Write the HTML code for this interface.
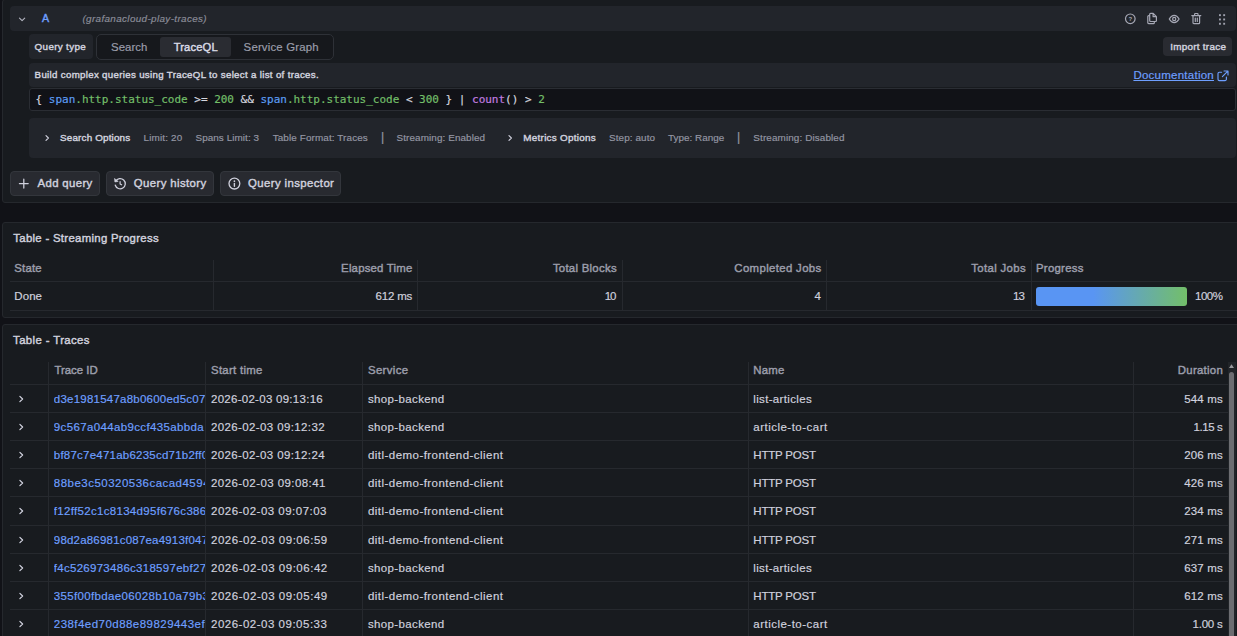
<!DOCTYPE html>
<html lang="en">
<head>
<meta charset="utf-8">
<title>Explore - Traces</title>
<style>
*{box-sizing:border-box;margin:0;padding:0}
html,body{width:1237px;height:636px;overflow:hidden;background:#111217}
body{position:relative;font-family:"Liberation Sans",sans-serif;font-size:11px;color:#ccccdc}
.abs{position:absolute}
.t{position:absolute;white-space:nowrap;line-height:14px;-webkit-text-stroke:0.18px currentColor}
.m{-webkit-text-stroke:0.42px currentColor}
.box{position:absolute;background:#181b1f;border:1px solid #25282d;border-radius:3px}
.sec{position:absolute;background:#22252b;border-radius:2px}
.btn{position:absolute;background:#282a30;border:1px solid #33363c;border-radius:4px}
svg{position:absolute;overflow:visible}
.code{font-family:"DejaVu Sans Mono","Liberation Mono",monospace}
h2{font-weight:normal}
button{font-family:inherit;color:inherit;padding:0;margin:0;text-align:left}
button.t,label.t{background:none;border:0}
a{text-decoration:none}
.hl{position:absolute;height:1px;background:#26292e}
.vl{position:absolute;width:1px;background:#26292e}
</style>
</head>
<body>
<main>
<section aria-label="Query editor">
<div class="box" style="left:2px;top:-1px;width:1240px;height:204px"></div>
<div class="sec" style="left:10px;top:6px;width:1226px;height:25px;border-radius:4px"></div>
<svg style="left:17px;top:13.7px" width="10" height="10" viewBox="0 0 10 10"><path d="M2.5 4.2 L5.1 6.6 L7.7 4.2" fill="none" stroke="#b4b5c1" stroke-width="1.15" stroke-linecap="round" stroke-linejoin="round"/></svg>
<div class="t m" style="left:41.9px;top:11px;font-size:10.7px;letter-spacing:0.259px;color:#6e9fff;">A</div>
<div class="t" style="left:82.4px;top:12px;font-size:9.9px;letter-spacing:0.359px;color:#8a8c98;font-style:italic;">(grafanacloud-play-traces)</div>
<svg style="left:1124px;top:13px" width="12" height="12" viewBox="0 0 12 12"><circle cx="6.3" cy="5.8" r="4.8" fill="none" stroke="#a6a8b5" stroke-width="1.2"/><text x="6.3" y="8" font-size="6" font-weight="bold" font-family="Liberation Sans, sans-serif" text-anchor="middle" fill="#a6a8b5">?</text></svg>
<svg style="left:1146px;top:12px" width="12" height="13" viewBox="0 0 12 13"><path d="M4.6 1.4 h2.6 l3.2 3.2 v4 a0.9 0.9 0 0 1 -0.9 0.9 h-4.9 a0.9 0.9 0 0 1 -0.9 -0.9 v-6.3 a0.9 0.9 0 0 1 0.9 -0.9 z M7.1 1.6 v3.1 h3.1 M3.7 3.6 h-1 a0.9 0.9 0 0 0 -0.9 0.9 v6.3 a0.9 0.9 0 0 0 0.9 0.9 h4.7 a0.9 0.9 0 0 0 0.9 -0.9 v-1.3" fill="none" stroke="#a6a8b5" stroke-width="1.2" stroke-linejoin="round"/></svg>
<svg style="left:1168px;top:13px" width="13" height="12" viewBox="0 0 13 12"><path d="M1.3 6 C2.9 3.3 4.6 2.4 6.2 2.4 S9.5 3.3 11.1 6 C9.5 8.7 7.8 9.6 6.2 9.6 S2.9 8.7 1.3 6 z" fill="none" stroke="#a6a8b5" stroke-width="1.2"/><circle cx="6.2" cy="6" r="1.6" fill="none" stroke="#a6a8b5" stroke-width="1.2"/></svg>
<svg style="left:1190px;top:12px" width="12" height="13" viewBox="0 0 12 13"><path d="M1.8 3.6 h9 M4.6 3.4 v-1.2 a0.7 0.7 0 0 1 0.7 -0.7 h2 a0.7 0.7 0 0 1 0.7 0.7 v1.2 M3 3.8 v7 a0.9 0.9 0 0 0 0.9 0.9 h4.8 a0.9 0.9 0 0 0 0.9 -0.9 v-7 M5.3 6 v3.4 M7.3 6 v3.4" fill="none" stroke="#a6a8b5" stroke-width="1.2" stroke-linecap="round"/></svg>
<svg style="left:1218px;top:13px" width="9" height="12" viewBox="0 0 9 12"><g fill="#9fa1ad"><rect x="1" y="1.2" width="1.9" height="1.9"/><rect x="5.2" y="1.2" width="1.9" height="1.9"/><rect x="1" y="5.5" width="1.9" height="1.9"/><rect x="5.2" y="5.5" width="1.9" height="1.9"/><rect x="1" y="9.8" width="1.9" height="1.9"/><rect x="5.2" y="9.8" width="1.9" height="1.9"/></g></svg>
<div class="sec" style="left:29px;top:34px;width:64px;height:25px;border-radius:4px"></div>
<label class="t m" style="left:34.6px;top:40px;font-size:9.9px;letter-spacing:0.309px;color:#d0d1de;">Query type</label>
<div class="abs" style="left:96px;top:34px;width:238px;height:26px;border:1px solid #2e3137;border-radius:5px;background:#16181c"></div>
<div class="abs" style="left:160px;top:37px;width:71px;height:20px;background:#2a2c32;border-radius:3px"></div>
<button class="t" type="button" role="radio" aria-checked="false" style="left:111px;top:40px;font-size:11.4px;letter-spacing:0.051px;color:#9c9eab;">Search</button>
<button class="t m" type="button" role="radio" aria-checked="true" style="left:173.7px;top:40px;font-size:11.2px;letter-spacing:0.142px;color:#dadbe6;">TraceQL</button>
<button class="t" type="button" role="radio" aria-checked="false" style="left:243.6px;top:40px;font-size:11.4px;letter-spacing:0.184px;color:#9c9eab;">Service Graph</button>
<div class="abs" style="left:1163px;top:37px;width:69px;height:19px;background:#292b31;border-radius:4px"></div>
<button class="t m" type="button" style="left:1170.2px;top:40px;font-size:9.9px;letter-spacing:0.276px;color:#d0d1de;">Import trace</button>
<div class="sec" style="left:29px;top:63px;width:1207px;height:24px;border-radius:4px"></div>
<div class="t m" style="left:34.6px;top:68px;font-size:9.7px;letter-spacing:0.323px;color:#d0d1de;">Build complex queries using TraceQL to select a list of traces.</div>
<a class="t" href="#documentation" style="left:1133.4px;top:68px;font-size:11.5px;letter-spacing:0.249px;color:#6e9fff;text-decoration:underline;text-underline-offset:1px;text-decoration-thickness:1px;">Documentation</a>
<svg style="left:1216px;top:68.6px" width="13" height="13" viewBox="0 0 13 13"><path d="M5.6 3.2 h-2.2 a1.4 1.4 0 0 0 -1.4 1.4 v5.6 a1.4 1.4 0 0 0 1.4 1.4 h5.6 a1.4 1.4 0 0 0 1.4 -1.4 v-2.2 M8 2 h4 v4 M11.8 2.2 L6.4 7.6" fill="none" stroke="#6e9fff" stroke-width="1.15" stroke-linecap="round" stroke-linejoin="round"/></svg>
<div class="abs" style="left:29px;top:88px;width:1207px;height:23px;background:#111217;border:1px solid #2a2d33;border-radius:3px"></div>
<code class="t code" style="left:35.6px;top:93px;font-size:11px;letter-spacing:-0.012px;color:#d4d5df">{ <span style="color:#5c9df5">span</span><span style="color:#73bf69">.http.status_code</span> &gt;= <span style="color:#73bf69">200</span> &amp;&amp; <span style="color:#5c9df5">span</span><span style="color:#73bf69">.http.status_code</span> &lt; <span style="color:#73bf69">300</span> } | <span style="color:#c27de0">count</span>() &gt; <span style="color:#73bf69">2</span></code>
<div class="sec" style="left:29px;top:118px;width:1207px;height:40px;border-radius:4px"></div>
<svg style="left:43px;top:133px" width="8" height="10" viewBox="0 0 8 10"><path d="M3 2.7 L5.4 5 L3 7.3" fill="none" stroke="#d0d1de" stroke-width="1.15" stroke-linecap="round" stroke-linejoin="round"/></svg>
<div class="t m" style="left:60.1px;top:131px;font-size:9.9px;letter-spacing:0.152px;color:#d0d1de;">Search Options</div>
<div class="t" style="left:143.6px;top:131px;font-size:9.9px;letter-spacing:0.164px;color:#9496a3;">Limit: 20</div>
<div class="t" style="left:195.5px;top:131px;font-size:9.9px;letter-spacing:0.073px;color:#9496a3;">Spans Limit: 3</div>
<div class="t" style="left:272.7px;top:131px;font-size:9.9px;letter-spacing:0.122px;color:#9496a3;">Table Format: Traces</div>
<span class="t" style="left:380.9px;top:130px;font-size:12.3px;color:#9496a3;">|</span>
<div class="t" style="left:396.5px;top:131px;font-size:9.9px;letter-spacing:0.109px;color:#9496a3;">Streaming: Enabled</div>
<svg style="left:506px;top:133px" width="8" height="10" viewBox="0 0 8 10"><path d="M3 2.7 L5.4 5 L3 7.3" fill="none" stroke="#d0d1de" stroke-width="1.15" stroke-linecap="round" stroke-linejoin="round"/></svg>
<div class="t m" style="left:523.3px;top:131px;font-size:9.9px;letter-spacing:0.273px;color:#d0d1de;">Metrics Options</div>
<div class="t" style="left:609px;top:131px;font-size:9.9px;letter-spacing:0.107px;color:#9496a3;">Step: auto</div>
<div class="t" style="left:668.1px;top:131px;font-size:9.9px;letter-spacing:0.018px;color:#9496a3;">Type: Range</div>
<span class="t" style="left:736.9px;top:130px;font-size:12.3px;color:#9496a3;">|</span>
<div class="t" style="left:753.3px;top:131px;font-size:9.9px;letter-spacing:0.125px;color:#9496a3;">Streaming: Disabled</div>
<button type="button" class="btn" style="left:10px;top:171px;width:90px;height:25px">
<svg style="left:7px;top:6px" width="11" height="11" viewBox="0 0 11 11"><path d="M5.8 1.2 v8.8 M1.4 5.6 h8.8" stroke="#cfd0dc" stroke-width="1.25" fill="none" stroke-linecap="round"/></svg>
<span class="t m" style="left:26.5px;top:4px;font-size:11.4px;letter-spacing:0.351px;color:#d0d1de;">Add query</span>
</button>
<button type="button" class="btn" style="left:106px;top:171px;width:108px;height:25px">
<svg style="left:6px;top:5px" width="13" height="13" viewBox="0 0 13 13"><path d="M2.7 4.3 A5.1 5.1 0 1 1 2.3 8.2" stroke="#cfd0dc" stroke-width="1.3" fill="none" stroke-linecap="round"/><path d="M1.5 1.5 L1.9 5 L5.2 4.4 z" fill="#cfd0dc" stroke="#cfd0dc" stroke-width="0.6" stroke-linejoin="round"/><path d="M7.1 4.6 v2.3 l1.5 0.9" stroke="#cfd0dc" stroke-width="1.2" fill="none" stroke-linecap="round" stroke-linejoin="round"/></svg>
<span class="t m" style="left:26.8px;top:4px;font-size:11.4px;letter-spacing:0.382px;color:#d0d1de;">Query history</span>
</button>
<button type="button" class="btn" style="left:220px;top:171px;width:121px;height:25px">
<svg style="left:7px;top:5px" width="13" height="13" viewBox="0 0 13 13"><circle cx="6.4" cy="6.6" r="5.4" fill="none" stroke="#cfd0dc" stroke-width="1.3"/><path d="M6.4 6.4 v2.8" stroke="#cfd0dc" stroke-width="1.4" stroke-linecap="round"/><circle cx="6.4" cy="4.2" r="0.85" fill="#cfd0dc"/></svg>
<span class="t m" style="left:27.1px;top:4px;font-size:11.4px;letter-spacing:0.386px;color:#d0d1de;">Query inspector</span>
</button>
</section>
<section aria-label="Table - Streaming Progress">
<div class="box" style="left:2px;top:222px;width:1240px;height:96px"></div>
<h2 class="t m" style="left:13.3px;top:231px;font-size:11.4px;letter-spacing:0.292px;color:#d0d1de;">Table - Streaming Progress</h2>
<div role="table" aria-label="Streaming Progress">
<div role="row">
<div class="t m" role="columnheader" style="left:14.3px;top:261px;font-size:11.4px;letter-spacing:0.198px;color:#9c9eab;">State</div>
<div class="t m" role="columnheader" style="right:824.50px;top:261px;font-size:11.4px;letter-spacing:0.199px;color:#9c9eab;">Elapsed Time</div>
<div class="t m" role="columnheader" style="right:620.13px;top:261px;font-size:11.4px;letter-spacing:0.268px;color:#9c9eab;">Total Blocks</div>
<div class="t m" role="columnheader" style="right:415.45px;top:261px;font-size:11.4px;letter-spacing:0.349px;color:#9c9eab;">Completed Jobs</div>
<div class="t m" role="columnheader" style="right:211.07px;top:261px;font-size:11.4px;letter-spacing:0.33px;color:#9c9eab;">Total Jobs</div>
<div class="t m" role="columnheader" style="left:1036px;top:261px;font-size:11.4px;letter-spacing:0.263px;color:#9c9eab;">Progress</div>
</div>
<div role="row">
<div class="t" role="cell" style="left:14.3px;top:289px;font-size:11.5px;letter-spacing:0.075px;color:#d0d1de;">Done</div>
<div class="t" role="cell" style="right:824.89px;top:289px;font-size:11.5px;letter-spacing:-0.186px;color:#d0d1de;">612 ms</div>
<div class="t" role="cell" style="right:621.50px;top:289px;font-size:11.5px;letter-spacing:-0.998px;color:#d0d1de;">10</div>
<div class="t" role="cell" style="right:415.81px;top:289px;font-size:11.5px;letter-spacing:0.194px;color:#d0d1de;">4</div>
<div class="t" role="cell" style="right:212.80px;top:289px;font-size:11.5px;letter-spacing:-0.798px;color:#d0d1de;">13</div>
<div role="cell">
<div class="abs" role="progressbar" aria-valuenow="100" aria-valuemin="0" aria-valuemax="100" style="left:1036px;top:287px;width:151px;height:19px;border-radius:3px;background:linear-gradient(90deg,#5995f3 0%,#5995f3 38%,#73bf69 100%)"></div>
<span class="t" style="left:1195px;top:289px;font-size:11.5px;letter-spacing:-0.48px;color:#d0d1de;">100%</span>
</div>
</div>
<div class="vl" style="left:213px;top:260px;height:51px"></div>
<div class="vl" style="left:417px;top:260px;height:51px"></div>
<div class="vl" style="left:622px;top:260px;height:51px"></div>
<div class="vl" style="left:826px;top:260px;height:51px"></div>
<div class="vl" style="left:1031px;top:260px;height:51px"></div>
<div class="hl" style="left:10px;top:281px;width:1230px"></div>
<div class="hl" style="left:10px;top:310px;width:1230px"></div>
</div>
</section>
<section aria-label="Table - Traces">
<div class="box" style="left:2px;top:324px;width:1240px;height:330px"></div>
<h2 class="t m" style="left:13.1px;top:333px;font-size:11.4px;letter-spacing:0.375px;color:#d0d1de;">Table - Traces</h2>
<div role="table" aria-label="Traces">
<div role="row">
<div class="t m" role="columnheader" style="left:54.5px;top:363px;font-size:11.4px;letter-spacing:-0.019px;color:#9c9eab;">Trace ID</div>
<div class="t m" role="columnheader" style="left:211px;top:363px;font-size:11.4px;letter-spacing:0.285px;color:#9c9eab;">Start time</div>
<div class="t m" role="columnheader" style="left:368px;top:363px;font-size:11.4px;letter-spacing:0.345px;color:#9c9eab;">Service</div>
<div class="t m" role="columnheader" style="left:753.3px;top:363px;font-size:11.4px;letter-spacing:0.177px;color:#9c9eab;">Name</div>
<div class="t m" role="columnheader" style="right:13.92px;top:363px;font-size:11.4px;letter-spacing:0.28px;color:#9c9eab;">Duration</div>
</div>
<div class="vl" style="left:48px;top:362px;height:280px"></div>
<div class="vl" style="left:205px;top:362px;height:280px"></div>
<div class="vl" style="left:362px;top:362px;height:280px"></div>
<div class="vl" style="left:748px;top:362px;height:280px"></div>
<div class="vl" style="left:1133px;top:362px;height:280px"></div>
<div class="hl" style="left:10px;top:384px;width:1218px"></div>
<div role="row">
<svg role="img" aria-label="Expand row" style="left:17px;top:393.6px" width="8" height="10" viewBox="0 0 8 10"><path d="M2.9 2.4 L5.6 5 L2.9 7.6" fill="none" stroke="#d0d1de" stroke-width="1.25" stroke-linecap="round" stroke-linejoin="round"/></svg>
<a class="t" role="cell" href="#trace-d3e1981547a8b0600ed5c07" style="left:53.8px;top:392px;font-size:11.5px;letter-spacing:0.23px;color:#6e9fff;width:151.2px;overflow:hidden;">d3e1981547a8b0600ed5c07</a>
<div class="t" role="cell" style="left:211px;top:392px;font-size:11.5px;letter-spacing:0.274px;color:#d0d1de;">2026-02-03 09:13:16</div>
<div class="t" role="cell" style="left:368px;top:392px;font-size:11.5px;letter-spacing:0.354px;color:#d0d1de;">shop-backend</div>
<div class="t" role="cell" style="left:753.3px;top:392px;font-size:11.5px;letter-spacing:0.338px;color:#d0d1de;">list-articles</div>
<div class="t" role="cell" style="right:14.01px;top:392px;font-size:11.5px;letter-spacing:0.189px;color:#d0d1de;">544 ms</div>
</div>
<div class="hl" style="left:10px;top:412px;width:1218px"></div>
<div role="row">
<svg role="img" aria-label="Expand row" style="left:17px;top:421.8px" width="8" height="10" viewBox="0 0 8 10"><path d="M2.9 2.4 L5.6 5 L2.9 7.6" fill="none" stroke="#d0d1de" stroke-width="1.25" stroke-linecap="round" stroke-linejoin="round"/></svg>
<a class="t" role="cell" href="#trace-9c567a044ab9ccf435abbda" style="left:53.8px;top:420px;font-size:11.5px;letter-spacing:0.36px;color:#6e9fff;width:151.2px;overflow:hidden;">9c567a044ab9ccf435abbda</a>
<div class="t" role="cell" style="left:211px;top:420px;font-size:11.5px;letter-spacing:0.379px;color:#d0d1de;">2026-02-03 09:12:32</div>
<div class="t" role="cell" style="left:368px;top:420px;font-size:11.5px;letter-spacing:0.354px;color:#d0d1de;">shop-backend</div>
<div class="t" role="cell" style="left:753.3px;top:420px;font-size:11.5px;letter-spacing:0.486px;color:#d0d1de;">article-to-cart</div>
<div class="t" role="cell" style="right:14.59px;top:420px;font-size:11.5px;letter-spacing:-0.388px;color:#d0d1de;">1.15 s</div>
</div>
<div class="hl" style="left:10px;top:440px;width:1218px"></div>
<div role="row">
<svg role="img" aria-label="Expand row" style="left:17px;top:450.0px" width="8" height="10" viewBox="0 0 8 10"><path d="M2.9 2.4 L5.6 5 L2.9 7.6" fill="none" stroke="#d0d1de" stroke-width="1.25" stroke-linecap="round" stroke-linejoin="round"/></svg>
<a class="t" role="cell" href="#trace-bf87c7e471ab6235cd71b2ff0" style="left:53.8px;top:448px;font-size:11.5px;letter-spacing:0.23px;color:#6e9fff;width:151.2px;overflow:hidden;">bf87c7e471ab6235cd71b2ff0</a>
<div class="t" role="cell" style="left:211px;top:448px;font-size:11.5px;letter-spacing:0.379px;color:#d0d1de;">2026-02-03 09:12:24</div>
<div class="t" role="cell" style="left:368px;top:448px;font-size:11.5px;letter-spacing:0.455px;color:#d0d1de;">ditl-demo-frontend-client</div>
<div class="t" role="cell" style="left:753.3px;top:448px;font-size:11.5px;letter-spacing:-0.214px;color:#d0d1de;">HTTP POST</div>
<div class="t" role="cell" style="right:14.01px;top:448px;font-size:11.5px;letter-spacing:0.189px;color:#d0d1de;">206 ms</div>
</div>
<div class="hl" style="left:10px;top:468px;width:1218px"></div>
<div role="row">
<svg role="img" aria-label="Expand row" style="left:17px;top:478.2px" width="8" height="10" viewBox="0 0 8 10"><path d="M2.9 2.4 L5.6 5 L2.9 7.6" fill="none" stroke="#d0d1de" stroke-width="1.25" stroke-linecap="round" stroke-linejoin="round"/></svg>
<a class="t" role="cell" href="#trace-88be3c50320536cacad4594" style="left:53.8px;top:476px;font-size:11.5px;letter-spacing:0.48px;color:#6e9fff;width:151.2px;overflow:hidden;">88be3c50320536cacad4594</a>
<div class="t" role="cell" style="left:211px;top:476px;font-size:11.5px;letter-spacing:0.421px;color:#d0d1de;">2026-02-03 09:08:41</div>
<div class="t" role="cell" style="left:368px;top:476px;font-size:11.5px;letter-spacing:0.455px;color:#d0d1de;">ditl-demo-frontend-client</div>
<div class="t" role="cell" style="left:753.3px;top:476px;font-size:11.5px;letter-spacing:-0.214px;color:#d0d1de;">HTTP POST</div>
<div class="t" role="cell" style="right:14.01px;top:476px;font-size:11.5px;letter-spacing:0.189px;color:#d0d1de;">426 ms</div>
</div>
<div class="hl" style="left:10px;top:496px;width:1218px"></div>
<div role="row">
<svg role="img" aria-label="Expand row" style="left:17px;top:506.4px" width="8" height="10" viewBox="0 0 8 10"><path d="M2.9 2.4 L5.6 5 L2.9 7.6" fill="none" stroke="#d0d1de" stroke-width="1.25" stroke-linecap="round" stroke-linejoin="round"/></svg>
<a class="t" role="cell" href="#trace-f12ff52c1c8134d95f676c386" style="left:53.8px;top:504px;font-size:11.5px;letter-spacing:0.31px;color:#6e9fff;width:151.2px;overflow:hidden;">f12ff52c1c8134d95f676c386</a>
<div class="t" role="cell" style="left:211px;top:504px;font-size:11.5px;letter-spacing:0.484px;color:#d0d1de;">2026-02-03 09:07:03</div>
<div class="t" role="cell" style="left:368px;top:504px;font-size:11.5px;letter-spacing:0.455px;color:#d0d1de;">ditl-demo-frontend-client</div>
<div class="t" role="cell" style="left:753.3px;top:504px;font-size:11.5px;letter-spacing:-0.214px;color:#d0d1de;">HTTP POST</div>
<div class="t" role="cell" style="right:14.01px;top:504px;font-size:11.5px;letter-spacing:0.189px;color:#d0d1de;">234 ms</div>
</div>
<div class="hl" style="left:10px;top:525px;width:1218px"></div>
<div role="row">
<svg role="img" aria-label="Expand row" style="left:17px;top:534.6px" width="8" height="10" viewBox="0 0 8 10"><path d="M2.9 2.4 L5.6 5 L2.9 7.6" fill="none" stroke="#d0d1de" stroke-width="1.25" stroke-linecap="round" stroke-linejoin="round"/></svg>
<a class="t" role="cell" href="#trace-98d2a86981c087ea4913f047" style="left:53.8px;top:533px;font-size:11.5px;letter-spacing:0.2px;color:#6e9fff;width:151.2px;overflow:hidden;">98d2a86981c087ea4913f047</a>
<div class="t" role="cell" style="left:211px;top:533px;font-size:11.5px;letter-spacing:0.526px;color:#d0d1de;">2026-02-03 09:06:59</div>
<div class="t" role="cell" style="left:368px;top:533px;font-size:11.5px;letter-spacing:0.455px;color:#d0d1de;">ditl-demo-frontend-client</div>
<div class="t" role="cell" style="left:753.3px;top:533px;font-size:11.5px;letter-spacing:-0.214px;color:#d0d1de;">HTTP POST</div>
<div class="t" role="cell" style="right:14.01px;top:533px;font-size:11.5px;letter-spacing:0.189px;color:#d0d1de;">271 ms</div>
</div>
<div class="hl" style="left:10px;top:553px;width:1218px"></div>
<div role="row">
<svg role="img" aria-label="Expand row" style="left:17px;top:562.8px" width="8" height="10" viewBox="0 0 8 10"><path d="M2.9 2.4 L5.6 5 L2.9 7.6" fill="none" stroke="#d0d1de" stroke-width="1.25" stroke-linecap="round" stroke-linejoin="round"/></svg>
<a class="t" role="cell" href="#trace-f4c526973486c318597ebf27" style="left:53.8px;top:561px;font-size:11.5px;letter-spacing:0.28px;color:#6e9fff;width:151.2px;overflow:hidden;">f4c526973486c318597ebf27</a>
<div class="t" role="cell" style="left:211px;top:561px;font-size:11.5px;letter-spacing:0.526px;color:#d0d1de;">2026-02-03 09:06:42</div>
<div class="t" role="cell" style="left:368px;top:561px;font-size:11.5px;letter-spacing:0.354px;color:#d0d1de;">shop-backend</div>
<div class="t" role="cell" style="left:753.3px;top:561px;font-size:11.5px;letter-spacing:0.338px;color:#d0d1de;">list-articles</div>
<div class="t" role="cell" style="right:14.01px;top:561px;font-size:11.5px;letter-spacing:0.189px;color:#d0d1de;">637 ms</div>
</div>
<div class="hl" style="left:10px;top:581px;width:1218px"></div>
<div role="row">
<svg role="img" aria-label="Expand row" style="left:17px;top:591.0px" width="8" height="10" viewBox="0 0 8 10"><path d="M2.9 2.4 L5.6 5 L2.9 7.6" fill="none" stroke="#d0d1de" stroke-width="1.25" stroke-linecap="round" stroke-linejoin="round"/></svg>
<a class="t" role="cell" href="#trace-355f00fbdae06028b10a79b3" style="left:53.8px;top:589px;font-size:11.5px;letter-spacing:0.35px;color:#6e9fff;width:151.2px;overflow:hidden;">355f00fbdae06028b10a79b3</a>
<div class="t" role="cell" style="left:211px;top:589px;font-size:11.5px;letter-spacing:0.526px;color:#d0d1de;">2026-02-03 09:05:49</div>
<div class="t" role="cell" style="left:368px;top:589px;font-size:11.5px;letter-spacing:0.455px;color:#d0d1de;">ditl-demo-frontend-client</div>
<div class="t" role="cell" style="left:753.3px;top:589px;font-size:11.5px;letter-spacing:-0.214px;color:#d0d1de;">HTTP POST</div>
<div class="t" role="cell" style="right:14.01px;top:589px;font-size:11.5px;letter-spacing:0.189px;color:#d0d1de;">612 ms</div>
</div>
<div class="hl" style="left:10px;top:609px;width:1218px"></div>
<div role="row">
<svg role="img" aria-label="Expand row" style="left:17px;top:619.2px" width="8" height="10" viewBox="0 0 8 10"><path d="M2.9 2.4 L5.6 5 L2.9 7.6" fill="none" stroke="#d0d1de" stroke-width="1.25" stroke-linecap="round" stroke-linejoin="round"/></svg>
<a class="t" role="cell" href="#trace-238f4ed70d88e89829443ef" style="left:53.8px;top:617px;font-size:11.5px;letter-spacing:0.46px;color:#6e9fff;width:151.2px;overflow:hidden;">238f4ed70d88e89829443ef</a>
<div class="t" role="cell" style="left:211px;top:617px;font-size:11.5px;letter-spacing:0.505px;color:#d0d1de;">2026-02-03 09:05:33</div>
<div class="t" role="cell" style="left:368px;top:617px;font-size:11.5px;letter-spacing:0.354px;color:#d0d1de;">shop-backend</div>
<div class="t" role="cell" style="left:753.3px;top:617px;font-size:11.5px;letter-spacing:0.486px;color:#d0d1de;">article-to-cart</div>
<div class="t" role="cell" style="right:14.41px;top:617px;font-size:11.5px;letter-spacing:-0.205px;color:#d0d1de;">1.00 s</div>
</div>
</div>
<div class="abs" style="left:1228px;top:362px;width:8px;height:290px;background:#212428"></div>
<div class="abs" style="left:1229px;top:372px;width:5px;height:280px;background:#6c6d71;border-radius:2.5px"></div>
<svg style="left:1229px;top:364px" width="5" height="4" viewBox="0 0 5 4"><path d="M0 4 L2.5 0.2 L5 4 z" fill="#97989c"/></svg>
</section>
</main>
</body>
</html>
